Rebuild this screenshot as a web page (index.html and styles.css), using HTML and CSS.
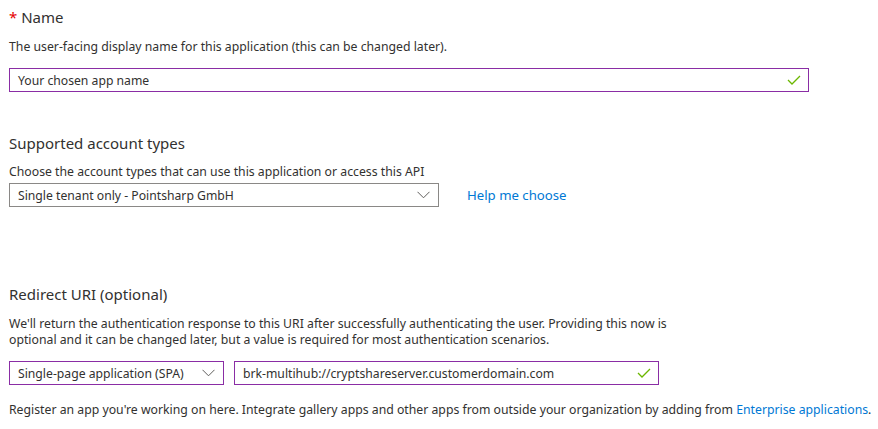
FILE: index.html
```html
<!DOCTYPE html>
<html lang="en">
<head>
<meta charset="utf-8">
<title>Register an application</title>
<link rel="stylesheet" href="styles.css">
</head>
<body>
<main class="form">
  <h2 class="title title-name"><span class="req">*</span> Name</h2>
  <p class="desc desc-name">The user-facing display name for this application (this can be changed later).</p>
  <div class="field field-name">
    <span class="value">Your chosen app name</span>
    <svg class="check" width="14" height="10" viewBox="0 0 14 10"><polyline points="1,5 5,9 13,1" fill="none" stroke="#6bb700" stroke-width="1.3"/></svg>
  </div>

  <h2 class="title title-accounts">Supported account types</h2>
  <p class="desc desc-accounts">Choose the account types that can use this application or access this API</p>
  <div class="row row-accounts">
    <div class="select select-accounts">
      <span class="value">Single tenant only - Pointsharp GmbH</span>
      <svg class="chev" width="13" height="8" viewBox="0 0 13 8"><polyline points="0.5,0.8 6.5,6.8 12.5,0.8" fill="none" stroke="#605e5c" stroke-width="1"/></svg>
    </div>
    <a class="link help" href="#">Help me choose</a>
  </div>

  <h2 class="title title-redirect">Redirect URI (optional)</h2>
  <p class="desc desc-redirect">We'll return the authentication response to this URI after successfully authenticating the user. Providing this now is optional and it can be changed later, but a value is required for most authentication scenarios.</p>
  <div class="row row-redirect">
    <div class="select select-platform active">
      <span class="value">Single-page application (SPA)</span>
      <svg class="chev" width="13" height="8" viewBox="0 0 13 8"><polyline points="0.5,0.8 6.5,6.8 12.5,0.8" fill="none" stroke="#605e5c" stroke-width="1"/></svg>
    </div>
    <div class="field field-uri">
      <span class="value">brk-multihub://cryptshareserver.customerdomain.com</span>
      <svg class="check" width="14" height="10" viewBox="0 0 14 10"><polyline points="1,5 5,9 13,1" fill="none" stroke="#6bb700" stroke-width="1.3"/></svg>
    </div>
  </div>

  <p class="desc desc-footer">Register an app you're working on here. Integrate gallery apps and other apps from outside your organization by adding from <a class="link" href="#">Enterprise applications</a>.</p>
</main>
</body>
</html>
```
FILE: styles.css
```css
html, body {
  margin: 0;
  padding: 0;
  background: #ffffff;
}

body {
  font-family: "Noto Sans", "Open Sans", sans-serif;
  color: #323130;
}

.form {
  padding: 7px 9px 0 9px;
  display: flex;
  flex-direction: column;
  align-items: flex-start;
}

.title {
  margin: 0;
  font-size: 15px;
  font-weight: 400;
  line-height: 20px;
  color: #323130;
}

.req {
  color: #e50000;
}

.desc {
  margin: 0;
  font-size: 12.25px;
  line-height: 16px;
}

.desc-name { margin-top: 12px; }
.field-name { margin-top: 13px; width: 800px; }
.title-accounts { margin-top: 41px; }
.desc-accounts { margin-top: 11px; }
.row-accounts { margin-top: 3px; }
.title-redirect { margin-top: 77px; }
.desc-redirect { margin-top: 12px; max-width: 670px; }
.row-redirect { margin-top: 13px; }
.desc-footer { margin-top: 17px; white-space: nowrap; }

.row {
  display: flex;
  align-items: center;
}

.field, .select {
  box-sizing: border-box;
  height: 24px;
  display: flex;
  align-items: center;
  justify-content: space-between;
  padding: 0 7px 0 8px;
  font-size: 12.2px;
  background: #fff;
}

.field {
  border: 1px solid #8a2da5;
}

.select {
  border: 1px solid #8a8886;
}

.select.active {
  border-color: #8a2da5;
}

.select-accounts { width: 430px; }
.select-platform { width: 215px; }
.field-uri { width: 425px; margin-left: 10px; }

.help {
  margin-left: 28px;
  font-size: 13.2px;
}

.link {
  color: #0078d4;
  text-decoration: none;
}

.check { flex: none; }
.chev { flex: none; margin-right: 1px; }
```
